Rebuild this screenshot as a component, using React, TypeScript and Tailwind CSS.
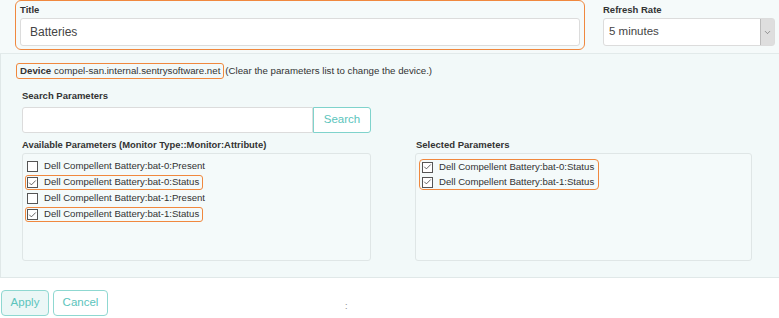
import { Check, ChevronDown } from 'lucide-react'

type Item = { label: string; checked: boolean }

const available: Item[] = [
  { label: 'Dell Compellent Battery:bat-0:Present', checked: false },
  { label: 'Dell Compellent Battery:bat-0:Status', checked: true },
  { label: 'Dell Compellent Battery:bat-1:Present', checked: false },
  { label: 'Dell Compellent Battery:bat-1:Status', checked: true },
]

const selected: Item[] = [
  { label: 'Dell Compellent Battery:bat-0:Status', checked: true },
  { label: 'Dell Compellent Battery:bat-1:Status', checked: true },
]

function Box({ checked }: { checked: boolean }) {
  return (
    <span className="flex h-[11px] w-[11px] shrink-0 items-center justify-center border border-[#555] bg-white">
      {checked && <Check size={10} strokeWidth={2} className="text-[#333]" />}
    </span>
  )
}

function Row({ item, ring, tight }: { item: Item; ring: boolean; tight?: boolean }) {
  return (
    <div
      className={
        'flex w-fit items-center gap-[6px] rounded-[3px] border px-[1px] ' +
        (tight ? 'h-[13px] ' : 'h-[15px] ') +
        (ring ? 'border-[#f0883e]' : 'border-transparent')
      }
    >
      <Box checked={item.checked} />
      <span className="whitespace-nowrap pr-[2px] text-[9.6px]">{item.label}</span>
    </div>
  )
}

export default function App() {
  return (
    <div className="h-[318px] w-[779px] overflow-hidden bg-white text-[9.7px] text-[#333] font-['Liberation_Sans',Arial,sans-serif]">
      {/* header fields */}
      <div className="flex h-[54px] border-b border-[#e2eaea] bg-[#f5fafa]">
        <div className="ml-[15px] h-[50px] w-[570px] rounded-[6px] border border-[#f0883e] px-[4px] pt-[2px]">
          <div className="h-[15px] text-[9.5px] font-bold leading-[13px]">Title</div>
          <div className="flex h-[28px] items-center rounded-[3px] border border-[#dcdcdc] bg-white px-[9px] text-[12px] text-[#444]">
            Batteries
          </div>
        </div>
        <div className="ml-[18px] w-[172px] pt-[3px]">
          <div className="h-[15px] text-[9.5px] font-bold leading-[13px]">Refresh Rate</div>
          <div className="flex h-[28px] items-center rounded-[3px] border border-[#dcdcdc] bg-white text-[11.5px] text-[#444]">
            <span className="flex-1 pl-[5px]">5 minutes</span>
            <span className="flex h-full w-[14px] items-center justify-center border-l border-[#bbb] bg-[#dedede]">
              <ChevronDown size={9} strokeWidth={1.5} className="text-[#555]" />
            </span>
          </div>
        </div>
      </div>

      {/* parameters */}
      <div className="h-[224px] border-b border-l border-[#e0e8e8] bg-[#f2f9f9] pt-[9px]">
        <div className="ml-[15px] flex h-[16px] items-center">
          <span className="rounded-[3px] border border-[#f0883e] px-[3px] leading-[14px]">
            <b>Device</b> compel-san.internal.sentrysoftware.net
          </span>
          <span className="pl-[1px]">(Clear the parameters list to change the device.)</span>
        </div>

        <div className="mt-[10px] flex items-end pl-[21px]">
          <div className="w-[349px]">
            <div className="h-[14px] text-[9.5px] font-bold leading-[14px]">Search Parameters</div>
            <div className="mt-[4px] flex h-[26px]">
              <div className="flex-1 rounded-l-[3px] border border-[#dcdcdc] bg-white" />
              <button className="w-[58px] rounded-r-[3px] border border-[#7fd3cc] bg-white text-[11.5px] text-[#5bc4bc]">
                Search
              </button>
            </div>
            <div className="mt-[5px] h-[14px] text-[9.4px] font-bold leading-[14px]">
              Available Parameters (Monitor Type::Monitor:Attribute)
            </div>
            <div className="mt-[1px] h-[108px] rounded-[3px] border border-[#dfe6e6] bg-[#f4fafa] pl-[2px] pt-[5px]">
              <div className="flex flex-col gap-[1px]">
                {available.map((it) => (
                  <Row key={it.label} item={it} ring={it.checked} />
                ))}
              </div>
            </div>
          </div>

          <div className="ml-[44px] w-[337px]">
            <div className="h-[14px] pl-[1px] text-[9.5px] font-bold leading-[14px]">Selected Parameters</div>
            <div className="mt-[1px] h-[108px] rounded-[3px] border border-[#dfe6e6] bg-[#f4fafa] pl-[3px] pt-[5px]">
              <div className="flex w-fit flex-col gap-[2px] rounded-[4px] border border-[#f0883e] py-[0.5px]">
                {selected.map((it) => (
                  <Row key={it.label} item={it} ring={false} tight />
                ))}
              </div>
            </div>
          </div>
        </div>
      </div>

      {/* actions */}
      <div className="relative mt-[12px] flex gap-[4px] pl-[1px]">
        <button className="h-[26px] w-[48px] rounded-[4px] border border-[#8fd8d1] bg-[#ebf7f6] text-[11.5px] text-[#5bc4bc]">
          Apply
        </button>
        <button className="h-[26px] w-[55px] rounded-[4px] border border-[#8fd8d1] bg-white text-[11.5px] text-[#5bc4bc]">
          Cancel
        </button>
        <span className="absolute left-[345px] top-[12px] text-[9px] leading-none text-[#888]">:</span>
      </div>
    </div>
  )
}
